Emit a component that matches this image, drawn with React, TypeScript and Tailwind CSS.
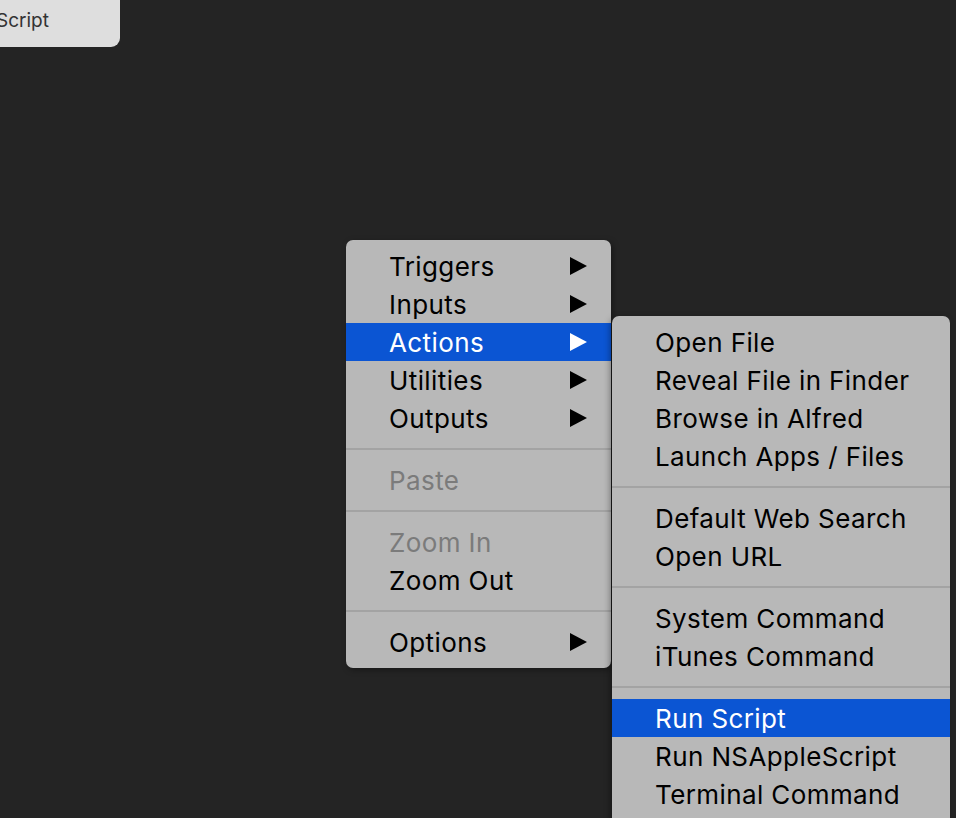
import React from "react";

type Item = { label: string; sub?: boolean; active?: boolean; disabled?: boolean } | "sep";

const mainItems: Item[] = [
  { label: "Triggers", sub: true },
  { label: "Inputs", sub: true },
  { label: "Actions", sub: true, active: true },
  { label: "Utilities", sub: true },
  { label: "Outputs", sub: true },
  "sep",
  { label: "Paste", disabled: true },
  "sep",
  { label: "Zoom In", disabled: true },
  { label: "Zoom Out" },
  "sep",
  { label: "Options", sub: true },
];

const actionItems: Item[] = [
  { label: "Open File" },
  { label: "Reveal File in Finder" },
  { label: "Browse in Alfred" },
  { label: "Launch Apps / Files" },
  "sep",
  { label: "Default Web Search" },
  { label: "Open URL" },
  "sep",
  { label: "System Command" },
  { label: "iTunes Command" },
  "sep",
  { label: "Run Script", active: true },
  { label: "Run NSAppleScript" },
  { label: "Terminal Command" },
];

const Arrow = ({ white }: { white?: boolean }) => (
  <svg width="17" height="18" viewBox="0 0 17 18" className="shrink-0">
    <polygon points="0,0 17,9 0,18" fill={white ? "#ffffff" : "#000000"} />
  </svg>
);

const MenuList = ({ items }: { items: Item[] }) => (
  <>
    {items.map((it, i) => {
      if (it === "sep") {
        return (
          <div key={i} className="h-6 flex items-center">
            <div className="h-[2px] w-full bg-[#a3a3a3]" />
          </div>
        );
      }
      return (
        <div
          key={i}
          className={`h-[38px] flex items-center justify-between pl-[43px] pr-6 ${
            it.active ? "bg-[#0b55d3] text-white" : it.disabled ? "text-[#7b7b7b]" : "text-black"
          }`}
        >
          <span className="whitespace-nowrap">{it.label}</span>
          {it.sub && <Arrow white={it.active} />}
        </div>
      );
    })}
  </>
);

export default function App() {
  return (
    <div
      className="relative w-[956px] h-[818px] overflow-hidden bg-[#242424]"
      style={{ fontFamily: "Inter, 'Liberation Sans', sans-serif" }}
    >
      {/* leftover button from the editor */}
      <div className="w-[124px] h-[47px] bg-[#dedede] rounded-br-[9px] flex items-center -ml-[4px]">
        <span className="text-[19px] text-[#333333] leading-none -mt-[6px]">Script</span>
      </div>

      {/* context menu */}
      <div className="absolute left-[346px] top-[240px] w-[265px] bg-[#b8b8b8] rounded-[7px] py-[7px] text-[26px] tracking-[0.4px] shadow-[2px_2px_6px_rgba(0,0,0,0.35)]">
        <MenuList items={mainItems} />
      </div>

      {/* actions submenu */}
      <div className="absolute left-[612px] top-[316px] w-[338px] h-[510px] bg-[#b8b8b8] rounded-[7px] py-[7px] text-[26px] tracking-[0.4px] shadow-[-2px_2px_6px_rgba(0,0,0,0.35)]">
        <MenuList items={actionItems} />
      </div>
    </div>
  );
}
